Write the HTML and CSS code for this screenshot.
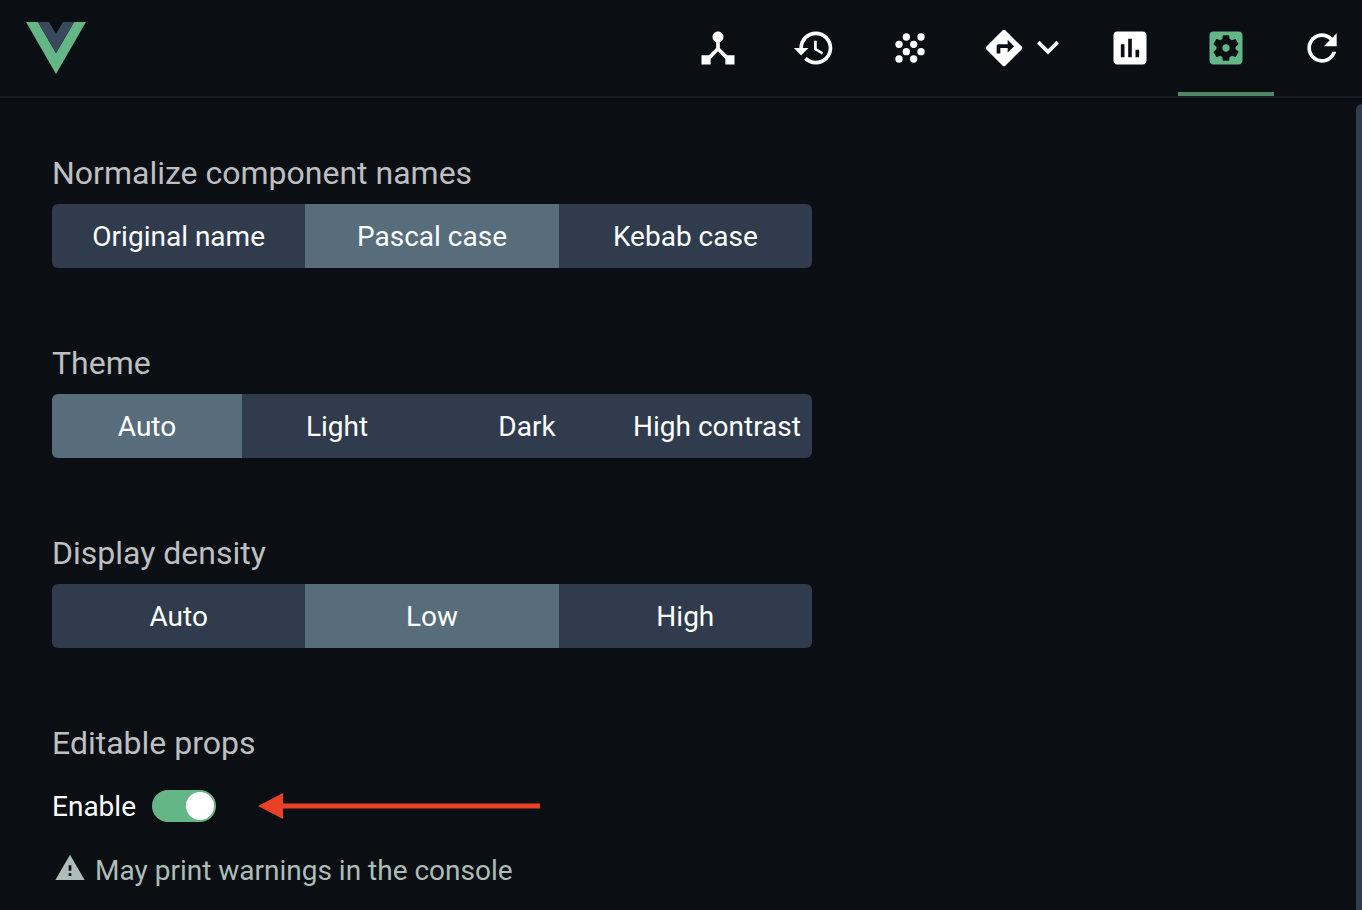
FILE: index.html
```html
<!DOCTYPE html>
<html lang="en">
<head>
<meta charset="utf-8">
<meta name="viewport" content="width=device-width, initial-scale=1">
<title>Vue Devtools settings</title>
<link rel="stylesheet" href="styles.css">
</head>
<body>
<header class="header">
  <svg class="logo" viewBox="0 0 262 227" role="img" aria-label="Vue">
    <path fill="#64b687" d="M0 0h52l79 136L210 0h52L131 227z"/>
    <path fill="#3b495c" d="M52 0h49l30 52L161 0h49L131 136z"/>
  </svg>
  <nav class="tabs">
    <button class="tab" aria-label="Components"><svg class="icon" viewBox="0 0 24 24"><path d="M17 16l-4-4V8.82C14.16 8.4 15 7.3 15 6c0-1.66-1.34-3-3-3S9 4.34 9 6c0 1.3.84 2.4 2 2.82V12l-4 4H3v5h5v-3.05l4-4.2 4 4.2V21h5v-5h-4z"/></svg></button>
    <button class="tab" aria-label="History"><svg class="icon" viewBox="0 0 24 24"><path d="M13 3c-4.97 0-9 4.03-9 9H1l3.89 3.89.07.14L9 12H6c0-3.87 3.13-7 7-7s7 3.13 7 7-3.13 7-7 7c-1.93 0-3.68-.79-4.94-2.06l-1.42 1.42C8.27 19.99 10.51 21 13 21c4.97 0 9-4.03 9-9s-4.03-9-9-9zm-1 5v5l4.28 2.54.72-1.21-3.5-2.08V8H12z"/></svg></button>
    <button class="tab" aria-label="Events"><svg class="icon" viewBox="0 0 24 24"><circle cx="10" cy="6" r="2"/><circle cx="18" cy="6" r="2"/><circle cx="6" cy="10" r="2"/><circle cx="14" cy="10" r="2"/><circle cx="10" cy="14" r="2"/><circle cx="18" cy="14" r="2"/><circle cx="6" cy="18" r="2"/><circle cx="14" cy="18" r="2"/></svg></button>
    <button class="tab tab-menu" aria-label="Routing"><svg class="icon" viewBox="0 0 24 24"><path d="M21.71 11.29l-9-9c-.39-.39-1.02-.39-1.41 0l-9 9c-.39.39-.39 1.02 0 1.41l9 9c.39.39 1.02.39 1.41 0l9-9c.39-.38.39-1.01 0-1.41zM14 14.5V12h-4v3H8v-4c0-.55.45-1 1-1h5V7.5l3.5 3.5-3.5 3.5z"/></svg><svg class="icon" viewBox="0 0 24 24"><path d="M16.59 8.09L12 12.67 7.41 8.09 6 9.5l6 6 6-6z"/></svg></button>
    <button class="tab" aria-label="Performance"><svg class="icon" viewBox="0 0 24 24"><path d="M19 3H5c-1.1 0-2 .9-2 2v14c0 1.1.9 2 2 2h14c1.1 0 2-.9 2-2V5c0-1.1-.9-2-2-2zM9 17H7v-7h2v7zm4 0h-2V7h2v10zm4 0h-2v-4h2v4z"/></svg></button>
    <button class="tab tab-active" aria-label="Settings"><svg class="icon" viewBox="0 0 24 24"><path d="M12 10c-1.1 0-2 .9-2 2s.9 2 2 2 2-.9 2-2-.9-2-2-2zm7-7H5c-1.11 0-2 .9-2 2v14c0 1.1.89 2 2 2h14c1.11 0 2-.9 2-2V5c0-1.1-.89-2-2-2zm-1.75 9c0 .23-.02.46-.05.68l1.48 1.16c.13.11.17.3.08.45l-1.4 2.42c-.09.15-.27.21-.43.15l-1.74-.7c-.36.28-.76.51-1.18.69l-.26 1.85c-.03.17-.18.3-.35.3h-2.8c-.17 0-.32-.13-.35-.29l-.26-1.85c-.43-.18-.82-.41-1.18-.69l-1.74.7c-.16.06-.34 0-.43-.15l-1.4-2.42c-.09-.15-.05-.34.08-.45l1.48-1.16c-.03-.23-.05-.46-.05-.69 0-.23.02-.46.05-.68l-1.48-1.16c-.13-.11-.17-.3-.08-.45l1.4-2.42c.09-.15.27-.21.43-.15l1.74.7c.36-.28.76-.51 1.18-.69l.26-1.85c.03-.17.18-.3.35-.3h2.8c.17 0 .32.13.35.29l.26 1.85c.43.18.82.41 1.18.69l1.74-.7c.16-.06.34 0 .43.15l1.4 2.42c.09.15.05.34-.08.45l-1.48 1.16c.03.23.05.46.05.69z"/></svg></button>
    <button class="tab tab-refresh" aria-label="Refresh"><svg class="icon" viewBox="0 0 24 24"><path d="M17.65 6.35C16.2 4.9 14.21 4 12 4c-4.42 0-7.99 3.58-7.99 8s3.57 8 7.99 8c3.73 0 6.84-2.55 7.73-6h-2.08c-.82 2.33-3.04 4-5.65 4-3.31 0-6-2.69-6-6s2.69-6 6-6c1.66 0 3.14.69 4.22 1.78L13 11h7V4l-2.35 2.35z"/></svg></button>
  </nav>
</header>
<div class="body">
  <main class="settings">
    <section class="field" role="radiogroup" aria-labelledby="names-title">
      <h2 class="title" id="names-title">Normalize component names</h2>
      <div class="group">
        <label class="option"><input class="radio" type="radio" name="names">Original name</label>
        <label class="option"><input class="radio" type="radio" name="names" checked>Pascal case</label>
        <label class="option"><input class="radio" type="radio" name="names">Kebab case</label>
      </div>
    </section>
    <section class="field" role="radiogroup" aria-labelledby="theme-title">
      <h2 class="title" id="theme-title">Theme</h2>
      <div class="group">
        <label class="option"><input class="radio" type="radio" name="theme" checked>Auto</label>
        <label class="option"><input class="radio" type="radio" name="theme">Light</label>
        <label class="option"><input class="radio" type="radio" name="theme">Dark</label>
        <label class="option"><input class="radio" type="radio" name="theme">High contrast</label>
      </div>
    </section>
    <section class="field" role="radiogroup" aria-labelledby="density-title">
      <h2 class="title" id="density-title">Display density</h2>
      <div class="group">
        <label class="option"><input class="radio" type="radio" name="density">Auto</label>
        <label class="option"><input class="radio" type="radio" name="density" checked>Low</label>
        <label class="option"><input class="radio" type="radio" name="density">High</label>
      </div>
    </section>
    <section class="field">
      <h2 class="title">Editable props</h2>
      <div class="row">
        <label class="switch-label" for="editable">Enable</label>
        <input class="switch" type="checkbox" role="switch" id="editable" checked>
        <svg class="arrow" viewBox="0 0 282 26" aria-hidden="true"><path d="M0 13L25 0v10.5h257v5H25V26z"/></svg>
      </div>
      <p class="note"><svg class="warning" viewBox="0 0 24 24" aria-hidden="true"><path d="M1 21h22L12 2 1 21zm12-3h-2v-2h2v2zm0-4h-2v-4h2v4z"/></svg>May print warnings in the console</p>
    </section>
  </main>
  <div class="scroll-track"><div class="scroll-thumb"></div></div>
</div>
</body>
</html>
```
FILE: styles.css
```css
* { box-sizing: border-box; }

body {
  margin: 0;
  min-height: 100vh;
  display: flex;
  flex-direction: column;
  background: #0b0f14;
  color: #fff;
  font-family: Roboto, "Liberation Sans", sans-serif;
  font-size: 28px;
  line-height: 41px;
}

.header {
  display: flex;
  align-items: center;
  justify-content: space-between;
  padding-left: 26px;
  border-bottom: 2px solid #151c23;
}

.logo { width: 60px; height: 52px; }

.tabs { display: flex; }

.tab {
  display: flex;
  align-items: center;
  height: 96px;
  padding: 0 26px;
  border: 0;
  background: none;
  color: #fff;
}

.tab-menu { padding: 0 12px 0 24px; }
.tab-active { color: #64b687; box-shadow: inset 0 -4px #4d8766; }
.tab-refresh { padding-right: 18px; }

.icon { width: 44px; height: 44px; fill: currentColor; }

.body { flex: 1; display: flex; justify-content: space-between; }

.settings {
  flex: 1;
  max-width: 812px;
  padding: 54px 0 0 52px;
}

.field { margin-bottom: 74px; }
.field:last-child { margin-bottom: 0; }

.title {
  margin: 0 0 10px;
  color: #bdbfc1;
  font-size: 32px;
  font-weight: 400;
  line-height: 42px;
}

.group {
  display: grid;
  grid-auto-flow: column;
  grid-auto-columns: minmax(0, 1fr);
  border-radius: 6px;
  overflow: hidden;
  background: #303c4e;
}

.option {
  display: flex;
  align-items: center;
  justify-content: center;
  height: 64px;
  white-space: nowrap;
  cursor: pointer;
}

.option:has(.radio:checked) { background: #576d7b; }

.radio { appearance: none; width: 0; height: 0; margin: 0; }

.row { display: flex; align-items: center; height: 64px; }

.switch-label { margin-right: 16px; }

.switch {
  appearance: none;
  display: flex;
  justify-content: flex-end;
  width: 64px;
  height: 32px;
  margin: 0;
  padding: 2px;
  border-radius: 16px;
  background: #64b687;
}

.switch::before {
  content: "";
  width: 28px;
  height: 28px;
  border-radius: 50%;
  background: #fff;
}

.switch:not(:checked) { justify-content: flex-start; background: #303c4e; }

.arrow { width: 282px; height: 26px; margin-left: 42px; fill: #ea4025; }

.note {
  display: flex;
  align-items: center;
  gap: 9px;
  height: 64px;
  margin: 0;
  padding-left: 2px;
  color: #adbdb7;
}

.warning { width: 32px; height: 32px; margin-bottom: 4px; fill: currentColor; }

.scroll-track { display: flex; width: 6px; padding-top: 6px; }
.scroll-thumb { flex: 1; border-top-left-radius: 6px; background: #303c4e; }
```
